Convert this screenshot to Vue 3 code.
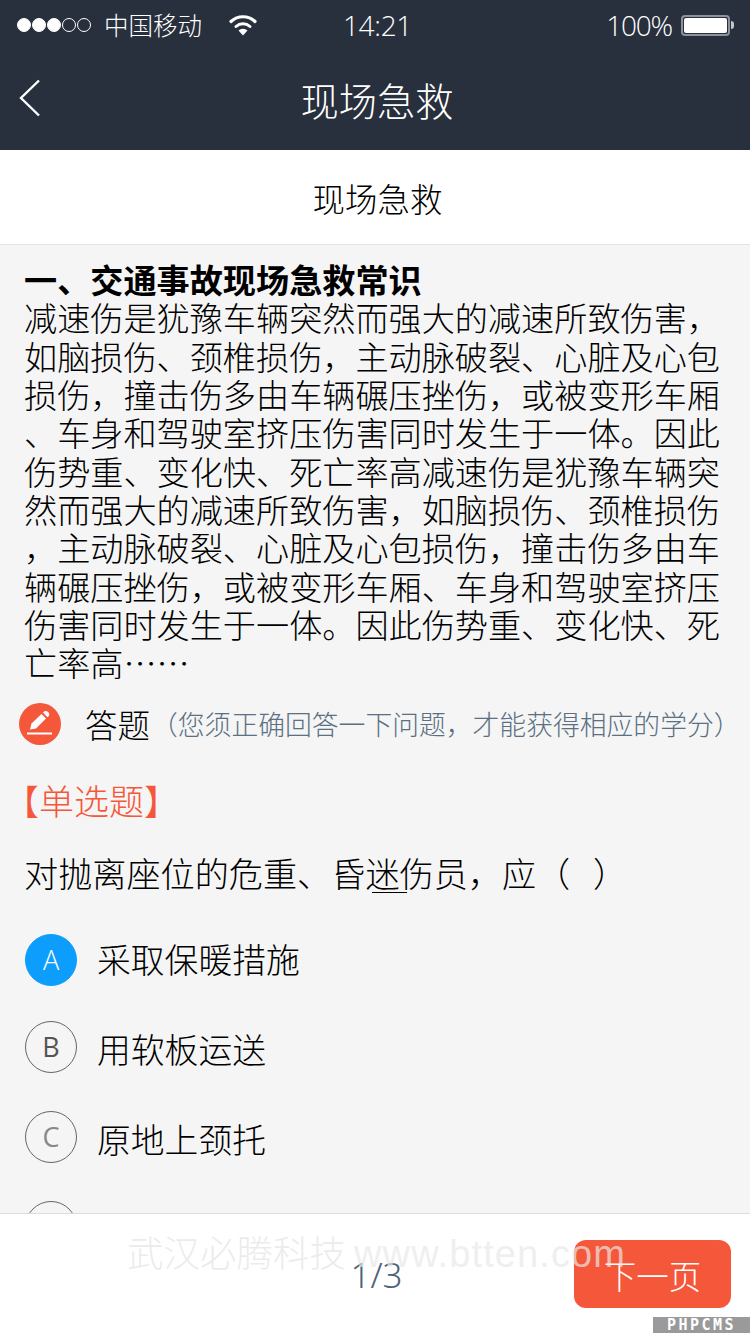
<script setup>
const lines = [
  '减速伤是犹豫车辆突然而强大的减速所致伤害，',
  '如脑损伤、颈椎损伤，主动脉破裂、心脏及心包',
  '损伤，撞击伤多由车辆碾压挫伤，或被变形车厢',
  '、车身和驾驶室挤压伤害同时发生于一体。因此',
  '伤势重、变化快、死亡率高减速伤是犹豫车辆突',
  '然而强大的减速所致伤害，如脑损伤、颈椎损伤',
  '，主动脉破裂、心脏及心包损伤，撞击伤多由车',
  '辆碾压挫伤，或被变形车厢、车身和驾驶室挤压',
  '伤害同时发生于一体。因此伤势重、变化快、死',
  '亡率高……'
]
const options = [
  { key: 'A', text: '采取保暖措施', active: true },
  { key: 'B', text: '用软板运送' },
  { key: 'C', text: '原地上颈托' },
  { key: 'D', text: '等待救援人员到达后再处理' }
]
</script>

<template>
  <div class="page">
    <header class="top">
      <div class="status">
        <div class="status-left">
          <span class="dots"><i class="on"></i><i class="on"></i><i class="on"></i><i></i><i></i></span>
          <span class="carrier">中国移动</span>
          <svg class="wifi" width="28" height="24" viewBox="0 0 28 24">
            <path d="M2 8.500A17.500 17.500 0 0 1 26 8.500" fill="none" stroke="#fff" stroke-width="3.200" stroke-linecap="round"/>
            <path d="M7 13.500A10.500 10.500 0 0 1 21 13.500" fill="none" stroke="#fff" stroke-width="3" stroke-linecap="round"/>
            <path d="M9.500 17.500L14 22.500L18.500 17.500A6.500 6.500 0 0 0 9.500 17.500Z" fill="#fff"/>
          </svg>
        </div>
        <span class="time">14:21</span>
        <div class="status-right">
          <span class="pct">100%</span>
          <span class="battery"><span class="fill"></span></span>
          <span class="nub"></span>
        </div>
      </div>
      <div class="nav">
        <svg class="back" width="22" height="38" viewBox="0 0 22 38">
          <path d="M20 1.500L2 19L20 36.500" fill="none" stroke="#fff" stroke-width="2.400"/>
        </svg>
        <h1 class="title">现场急救</h1>
      </div>
    </header>

    <main class="content">
      <div class="subhead">现场急救</div>
      <article class="article">
        <h2 class="article-title">一、交通事故现场急救常识</h2>
        <p v-for="line in lines" :key="line" class="line">{{ line }}</p>
      </article>

      <div class="answer-head">
        <span class="pen">
          <svg width="26" height="28" viewBox="0 0 26 28">
            <path d="M4.500 13.500L14.500 4L19 8.500L9 18.500L3 19.500Z" fill="#fff"/>
            <path d="M16 2.500L17.500 1.200Q19 .5 20.500 1.500L22 3Q22.800 4.500 21.800 6L20.500 7.200Z" fill="#fff"/>
            <path d="M0 23.500H25" stroke="#fff" stroke-width="2"/>
          </svg>
        </span>
        <span class="answer-label">答题</span>
        <span class="answer-hint">（您须正确回答一下问题，才能获得相应的学分）</span>
      </div>

      <div class="qtype">【单选题】</div>
      <div class="question">对抛离座位的危重、昏<span class="mark">迷</span>伤员，应（&nbsp;&nbsp;&nbsp;）</div>

      <ul class="options">
        <li v-for="o in options" :key="o.key" class="option" :class="{ selected: o.active }">
          <span class="badge" :class="{ active: o.active, dim: o.key === 'C' }">{{ o.key }}</span>
          <span class="opt-text">{{ o.text }}</span>
        </li>
      </ul>
    </main>

    <footer class="footer">
      <span class="pager">1/3</span>
      <button class="next">下一页</button>
    </footer>

    <div class="watermark">武汉必腾科技 <span class="wm-url">www.btten.com</span></div>
    <div class="cms">PHPCMS</div>
  </div>
</template>

<style>
html, body { margin: 0; padding: 0; background: #f5f5f5; }
</style>

<style scoped>
.page {
  position: relative;
  width: 750px;
  height: 1334px;
  overflow: hidden;
  display: flex;
  flex-direction: column;
  background: #f5f5f5;
  color: #000;
  font-family: "Noto Sans CJK SC", "Noto Sans", sans-serif;
  font-weight: 300;
}
.top { background: #282f3d; color: #fff; height: 150px; flex: none; }
.status {
  height: 50px;
  display: grid;
  grid-template-columns: 1fr auto 1fr;
  align-items: center;
}
.status-left { display: flex; align-items: center; padding-left: 17px; }
.dots { display: flex; gap: 1px; }
.dots i { width: 14px; height: 14px; border: 1px solid #fff; border-radius: 50%; box-sizing: border-box; }
.dots i.on { background: #fff; }
.carrier { font-size: 24.500px; margin-left: 13px; line-height: 50px; }
.wifi { margin-left: 27px; margin-top: 0; }
.time { font-size: 28px; font-family: "Open Sans", sans-serif; font-weight: 300; padding-left: 5px; letter-spacing: -0.300px; }
.status-right { display: flex; align-items: center; justify-content: flex-end; padding-right: 16px; }
.pct { font-size: 28px; font-family: "Open Sans", sans-serif; font-weight: 300; letter-spacing: -1.200px; margin-right: 9px; }
.battery {
  width: 49px; height: 21px; box-sizing: border-box; padding: 1px;
  border: 2px solid #8e939b; border-radius: 4px; display: flex;
}
.fill { flex: 1; background: #fff; border-radius: 2px; }
.nub { width: 3px; height: 8px; background: #c4c6ca; border-radius: 0 3px 3px 0; margin-left: 1px; }
.nav {
  position: relative;
  height: 100px;
  display: flex;
  align-items: center;
  justify-content: center;
  padding-left: 4px;
}
.back { position: absolute; left: 19px; top: 29px; }
.title { margin: 0; font-size: 38.300px; font-weight: 300; line-height: 94px; }

.content { flex: 1; min-height: 0; overflow: hidden; }
.subhead {
  height: 94px;
  line-height: 96px;
  padding-left: 5px;
  text-align: center;
  font-size: 32.500px;
  background: #fff;
  border-bottom: 1px solid #e4e4e4;
}
.article { padding: 15px 0 0 24px; font-size: 33.150px; line-height: 38.350px; }
.article-title { margin: 0; font-size: 33.150px; font-weight: 700; line-height: 38.350px; color: #000; }
.line { margin: 0; white-space: nowrap; }
.answer-head { display: flex; align-items: center; padding-left: 19px; margin-top: 19px; height: 46px; }
.pen {
  width: 42px; height: 42px; border-radius: 50%; background: #f5573b;
  display: flex; align-items: center; justify-content: center; flex: none;
}
.answer-label { font-size: 32.500px; margin-left: 24px; }
.answer-hint { font-size: 26.800px; color: #5b7083; margin-left: 1px; white-space: nowrap; }
.qtype { font-size: 35px; color: #f5573b; line-height: 46px; margin-top: 30px; padding-left: 4px; }
.question { font-size: 34.150px; line-height: 46px; margin-top: 26px; padding-left: 24px; white-space: nowrap; }
.mark { position: relative; }
.mark::after {
  content: ""; position: absolute; left: 7px; width: 35px; height: 1px; bottom: 4px; background: #000;
}
.options { list-style: none; margin: 36px 0 0; padding: 0 0 0 25px; display: flex; flex-direction: column; gap: 38px; }
.option { display: flex; align-items: center; height: 52px; }
.badge {
  width: 52px; height: 52px; box-sizing: border-box; border: 1px solid #666; border-radius: 50%;
  display: flex; align-items: center; justify-content: center; flex: none;
  font-family: "Open Sans", sans-serif; font-size: 27px; color: #555; font-weight: 400;
}
.badge.active { background: #0d9dfd; border-color: #0d9dfd; color: #fff; position: relative; top: 3px; font-weight: 300; }
.badge.dim { color: #888; }
.opt-text { margin-left: 20px; font-size: 33.800px; white-space: nowrap; position: relative; top: 2px; }

.footer {
  position: relative;
  flex: none;
  height: 121px;
  background: #fff;
  border-top: 1px solid #ddd;
  box-sizing: border-box;
  display: flex;
  justify-content: center;
  padding-left: 3px;
}
.pager { font-size: 35px; color: #4f6376; line-height: 122px; font-family: "Noto Sans", sans-serif; font-weight: 300; }
.next {
  position: absolute; right: 19px; top: 26px;
  width: 157px; height: 68px; border: 0; border-radius: 12px;
  background: #f5573b; color: #fff; font: inherit; font-size: 32.500px; padding: 0;
}
.watermark {
  position: absolute; left: 127px; top: 1228px;
  font-size: 36.500px; line-height: 48px; color: rgba(228,228,228,.72); white-space: nowrap;
  font-family: "Noto Sans CJK SC", sans-serif; font-weight: 300;
}
.wm-url { font-family: "Liberation Sans", sans-serif; font-size: 38px; letter-spacing: 1.100px; color: rgba(232,232,232,.7); }
.cms {
  position: absolute; right: 0; bottom: 1px; width: 97px; height: 16px;
  background: #9a9a9a; color: #fff; font-family: "DejaVu Sans Mono", monospace; font-weight: 700;
  font-size: 15px; line-height: 16px; text-align: center; letter-spacing: 2.500px;
}
</style>
